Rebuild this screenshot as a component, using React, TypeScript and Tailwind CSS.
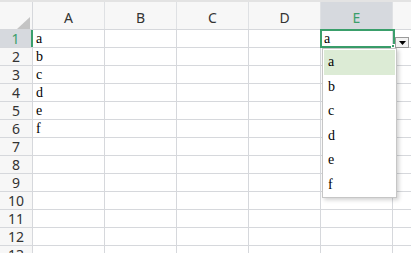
import React from "react";

const cols = ["A", "B", "C", "D", "E"];
const rows = Array.from({ length: 13 }, (_, i) => i + 1);
const vals: Record<number, string> = { 1: "a", 2: "b", 3: "c", 4: "d", 5: "e", 6: "f" };
const items = ["a", "b", "c", "d", "e", "f"];

export default function App() {
  return (
    <div className="relative w-[411px] h-[253px] overflow-hidden bg-white">
      <div className="h-[2px] bg-[#e3e3e3]" />
      {/* header */}
      <div className="flex h-[28px] bg-[#f7f7f7] border-b border-[#d6d8dc]">
        <div className="relative w-[33px] shrink-0 border-r border-[#d6d8dc]">
          <svg className="absolute left-[17px] top-[15px]" width="13" height="12" viewBox="0 0 13 12">
            <polygon points="13,0 13,12 0,12" fill="#c4c4c4" />
          </svg>
        </div>
        {cols.map((c) => (
          <div
            key={c}
            className={`w-[72px] shrink-0 flex items-center justify-center pt-[3px] border-r border-[#dfe1e4] text-[14px] font-['Noto_Sans',sans-serif] ${
              c === "E" ? "bg-[#d6d9de] text-[#3a9f6b]" : "text-[#333]"
            }`}
          >
            {c}
          </div>
        ))}
        <div className="flex-1" />
      </div>
      {/* rows */}
      {rows.map((r) => (
        <div key={r} className="flex h-[18px] border-b border-[#d6d8dc]">
          <div
            className={`w-[33px] shrink-0 flex items-center justify-center pt-[1px] border-r text-[14px] leading-none font-['Noto_Sans',sans-serif] ${
              r === 1 ? "bg-[#d6d9de] text-[#3a9f6b] border-[#3a9f6b] border-r-2" : "bg-[#f7f7f7] text-[#333] border-[#d6d8dc]"
            }`}
          >
            {r}
          </div>
          {cols.map((c) => (
            <div
              key={c}
              className="w-[72px] shrink-0 border-r border-[#d6d8dc] pl-[3px] pt-[1px] flex items-center text-[14px] leading-none text-black font-['Liberation_Serif',serif]"
            >
              {c === "A" && vals[r] ? vals[r] : c === "E" && r === 1 ? "a" : ""}
            </div>
          ))}
          <div className="flex-1" />
        </div>
      ))}
      {/* active cell border */}
      <div className="absolute left-[320px] top-[29px] w-[75px] h-[19px] border-2 border-[#3a9f6b]" />
      <div className="absolute left-[391px] top-[44px] w-[4px] h-[4px] bg-[#3a9f6b] border border-white" />
      {/* dropdown button */}
      <div className="absolute left-[395px] top-[37px] w-[14px] h-[11px] bg-[#f2f2f2] border border-[#9a9a9a] flex items-center justify-center">
        <svg width="7" height="4" viewBox="0 0 7 4">
          <polygon points="0,0 7,0 3.5,4" fill="#000" />
        </svg>
      </div>
      {/* dropdown list */}
      <div className="absolute left-[322px] top-[48px] w-[75px] h-[150px] bg-white border border-[#c6c6c6] shadow-[2px_2px_4px_rgba(0,0,0,0.18)] pt-[1px] px-[1px]">
        {items.map((it, i) => (
          <div
            key={it}
            className={`h-[24.5px] flex items-center pl-[4px] text-[14px] leading-none text-black font-['Liberation_Serif',serif] ${
              i === 0 ? "bg-[#dcebd5]" : ""
            }`}
          >
            {it}
          </div>
        ))}
      </div>
    </div>
  );
}
